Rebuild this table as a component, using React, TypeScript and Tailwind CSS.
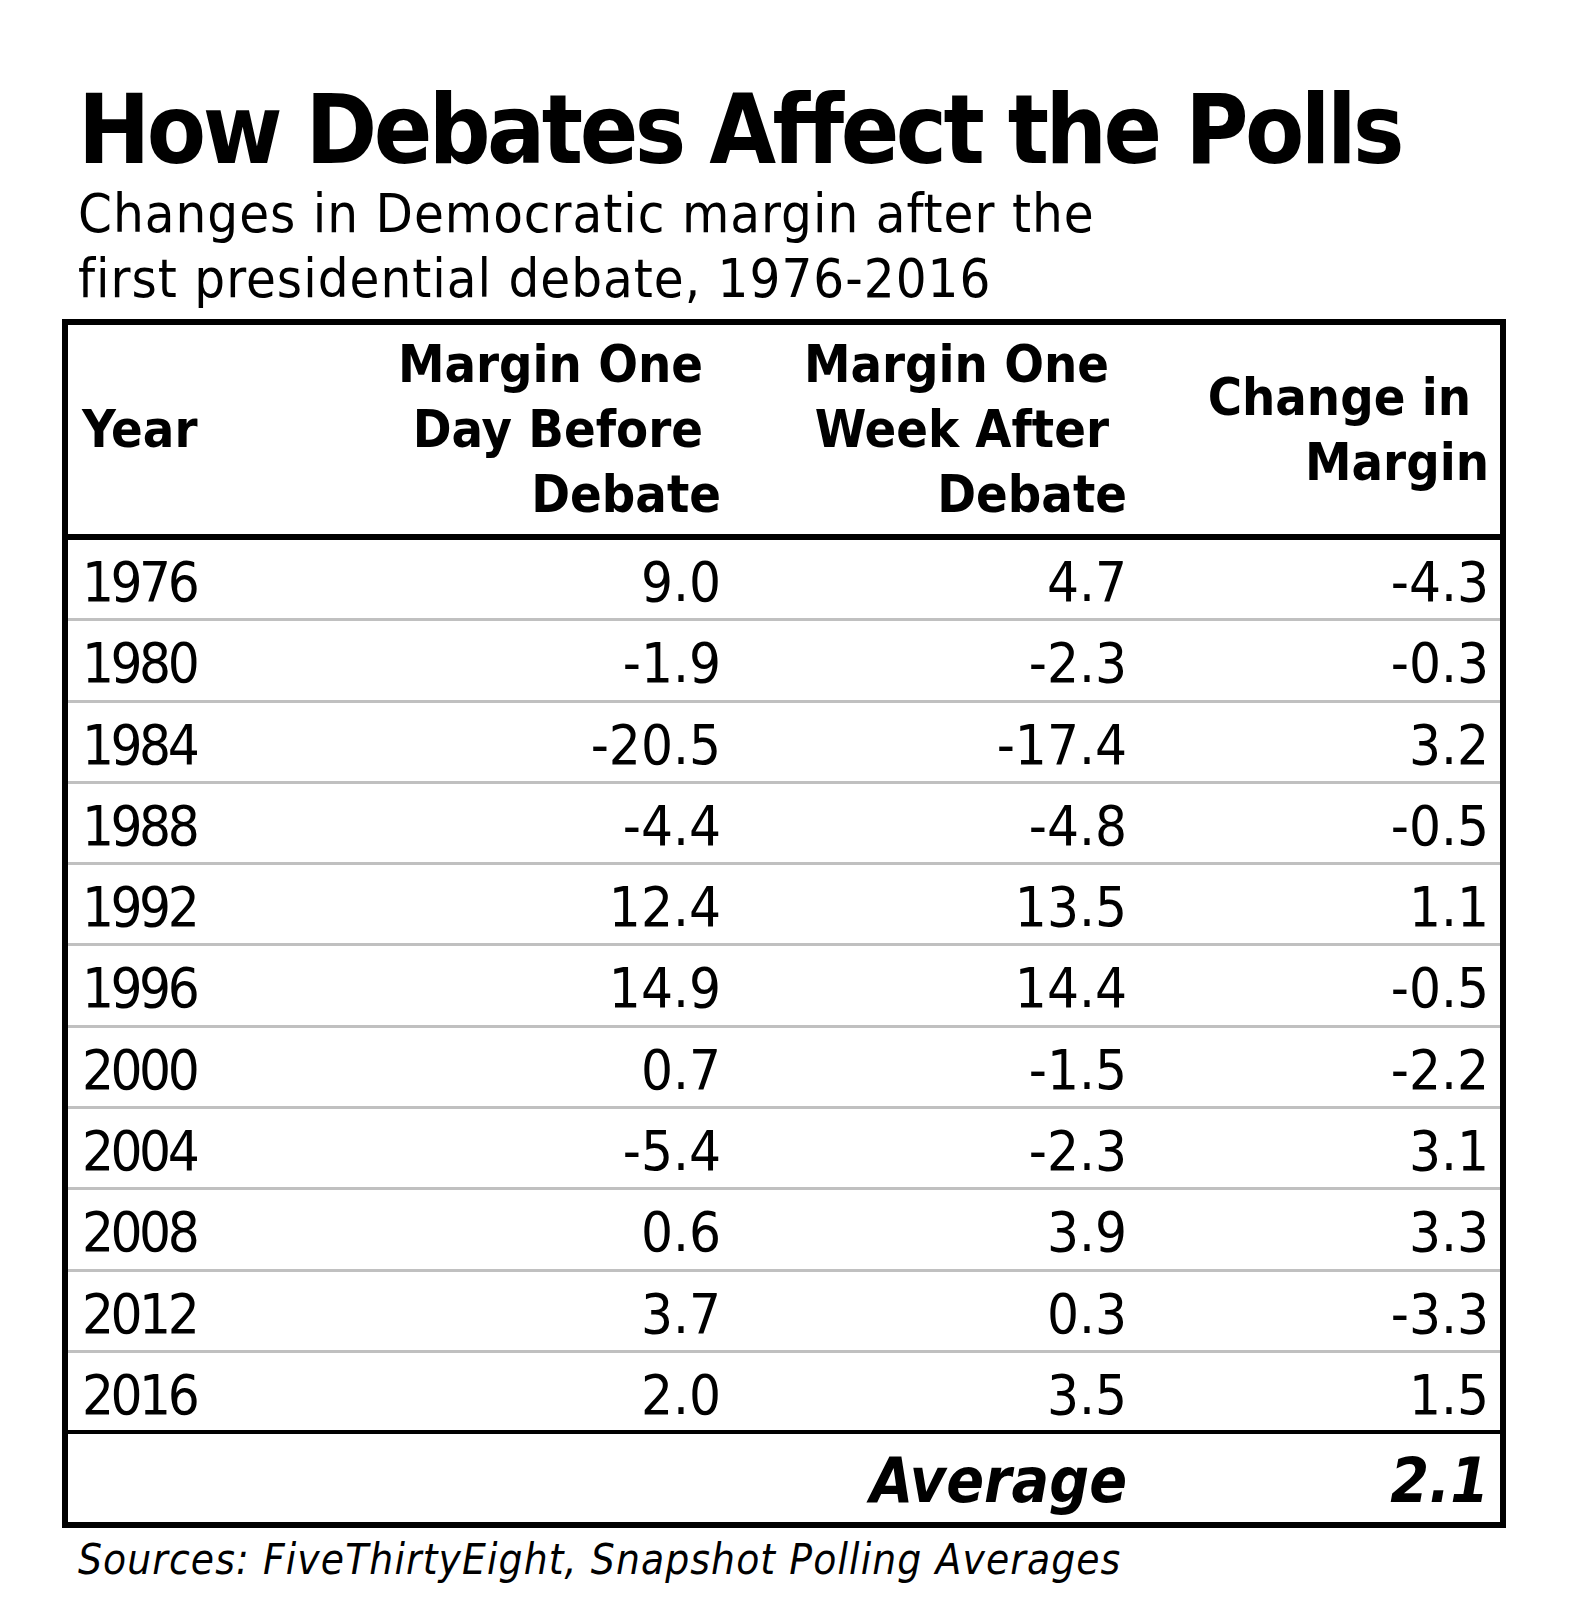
import React from 'react';

const rows = [
  ['1976', '9.0', '4.7', '-4.3'],
  ['1980', '-1.9', '-2.3', '-0.3'],
  ['1984', '-20.5', '-17.4', '3.2'],
  ['1988', '-4.4', '-4.8', '-0.5'],
  ['1992', '12.4', '13.5', '1.1'],
  ['1996', '14.9', '14.4', '-0.5'],
  ['2000', '0.7', '-1.5', '-2.2'],
  ['2004', '-5.4', '-2.3', '3.1'],
  ['2008', '0.6', '3.9', '3.3'],
  ['2012', '3.7', '0.3', '-3.3'],
  ['2016', '2.0', '3.5', '1.5'],
];

const cols = 'grid grid-cols-[262px_402px_406px_362px]';

export default function App() {
  return (
    <div
      className="w-[1575px] h-[1597px] bg-white text-black overflow-hidden"
      style={{ fontFamily: '"DejaVu Sans Condensed", "DejaVu Sans", sans-serif', fontStretch: 'condensed' }}
    >
      <div className="pl-[78px] pt-[80px]">
        <h1 className="text-[96px] font-bold leading-[100px] tracking-[-3.5px]">How Debates Affect the Polls</h1>
        <p className="text-[54px] leading-[65px] mt-[1px] tracking-[1px]">
          Changes in Democratic margin after the
          <br />
          first presidential debate, 1976-2016
        </p>
      </div>

      {/* Table */}
      <div className="ml-[62px] mt-[8px] w-[1444px] border-[6px] border-black">
        {/* Header */}
        <div className={`${cols} h-[215px] items-center text-[52px] font-bold leading-[65px] border-b-[6px] border-black`}>
          <div className="pl-[14px]">Year</div>
          <div className="text-right pr-[11px]">
            <div className="pr-[18px]">Margin One</div>
            <div className="pr-[18px]">Day Before</div>
            <div>Debate</div>
          </div>
          <div className="text-right pr-[11px]">
            <div className="pr-[18px]">Margin One</div>
            <div className="pr-[18px]">Week After</div>
            <div>Debate</div>
          </div>
          <div className="text-right pr-[11px]">
            <div className="pr-[18px]">Change in</div>
            <div>Margin</div>
          </div>
        </div>

        {/* Body */}
        {rows.map((r, i) => (
          <div
            key={r[0]}
            className={`${cols} h-[81.3px] items-center text-[56px] ${
              i === rows.length - 1 ? 'border-b-[4px] border-black' : 'border-b-[3px] border-[#c0c0c0]'
            }`}
          >
            <div className="pl-[14px] tracking-[-3.5px]">{r[0]}</div>
            <div className="text-right pr-[11px]">{r[1]}</div>
            <div className="text-right pr-[11px]">{r[2]}</div>
            <div className="text-right pr-[11px]">{r[3]}</div>
          </div>
        ))}

        {/* Average */}
        <div className={`${cols} h-[88px] items-center text-[62px] font-bold italic`}>
          <div />
          <div />
          <div className="text-right pr-[11px]">Average</div>
          <div className="text-right pr-[11px]">2.1</div>
        </div>
      </div>

      <p className="pl-[78px] mt-[7px] text-[42px] italic leading-[50px] tracking-[1.1px]">
        Sources: FiveThirtyEight, Snapshot Polling Averages
      </p>
    </div>
  );
}
